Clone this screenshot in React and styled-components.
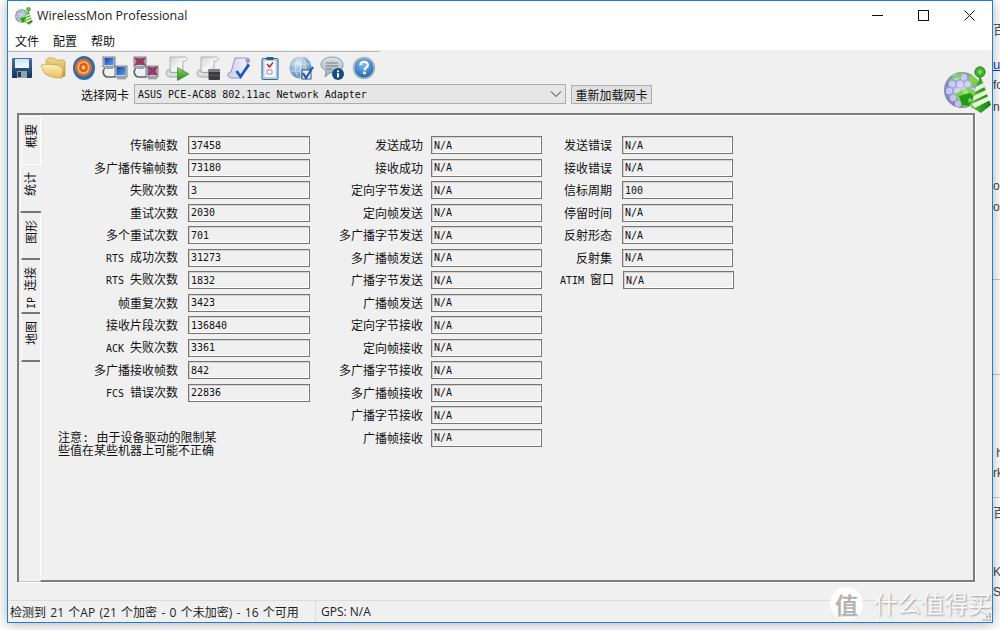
import styled, { createGlobalStyle } from "styled-components";

const GlobalStyle = createGlobalStyle`
  html, body {
    margin: 0;
    padding: 0;
    background: #fff;
  }
`;

const CJK = `"Noto Sans CJK SC", sans-serif`;
const MONO = `"DejaVu Sans Mono", "Liberation Mono", "Noto Sans CJK SC", monospace`;

const col1 = [
  ["传输帧数", "37458"],
  ["多广播传输帧数", "73180"],
  ["失败次数", "3"],
  ["重试次数", "2030"],
  ["多个重试次数", "701"],
  ["RTS 成功次数", "31273"],
  ["RTS 失败次数", "1832"],
  ["帧重复次数", "3423"],
  ["接收片段次数", "136840"],
  ["ACK 失败次数", "3361"],
  ["多广播接收帧数", "842"],
  ["FCS 错误次数", "22836"],
];

const col2 = [
  "发送成功", "接收成功", "定向字节发送", "定向帧发送", "多广播字节发送", "多广播帧发送", "广播字节发送",
  "广播帧发送", "定向字节接收", "定向帧接收", "多广播字节接收", "多广播帧接收", "广播字节接收", "广播帧接收",
].map((l) => [l, "N/A"]);

const col3 = [
  ["发送错误", "N/A"],
  ["接收错误", "N/A"],
  ["信标周期", "100"],
  ["停留时间", "N/A"],
  ["反射形态", "N/A"],
  ["反射集", "N/A"],
  ["ATIM 窗口", "N/A", true],
];

const tabs = [
  { label: "概要", h: 48, noLine: true },
  { label: "统计", h: 49, active: true },
  { label: "图形", h: 47 },
  { label: "IP 连接", h: 54 },
  { label: "地图", h: 48 },
];

const fragments = [
  { top: 23, text: "百", color: "#555", size: 13 },
  { top: 58, text: "u", color: "#1a35c0", size: 13, under: true },
  { top: 78, text: "fo", color: "#444", size: 12 },
  { top: 100, text: "n.", color: "#444", size: 12 },
  { top: 179, text: "oc", color: "#444", size: 12 },
  { top: 200, text: "o", color: "#444", size: 12 },
  { top: 446, text: " h", color: "#444", size: 12 },
  { top: 466, text: "rk", color: "#444", size: 12 },
  { top: 490, text: "---", color: "#aaa", size: 9 },
  { top: 506, text: "百", color: "#555", size: 13 },
  { top: 565, text: "KI", color: "#444", size: 12 },
  { top: 585, text: "SI", color: "#444", size: 12 },
];

// labels like "RTS 成功次数" have a small fixed-width latin part
function renderLabel(text) {
  const m = text.match(/^([A-Z]+ )(.*)$/);
  if (!m) return text;
  return (
    <>
      <Latin>{m[1]}</Latin>
      {m[2]}
    </>
  );
}

/* ---------- toolbar drawings ---------- */

function SaveIcon() {
  return (
    <svg width="24" height="24" viewBox="0 0 24 24">
      <defs>
        <linearGradient id="saveBody" x1="0" y1="0" x2="0" y2="1">
          <stop offset="0" stopColor="#3f78ab" />
          <stop offset="1" stopColor="#16324f" />
        </linearGradient>
        <linearGradient id="saveLabel" x1="0" y1="0" x2="0" y2="1">
          <stop offset="0" stopColor="#cfe5f7" />
          <stop offset="1" stopColor="#f4f9fd" />
        </linearGradient>
      </defs>
      <rect x="2" y="2" width="20" height="20" rx="1" fill="url(#saveBody)" />
      <rect x="5" y="3" width="14" height="9" fill="url(#saveLabel)" />
      <rect x="7" y="15" width="10" height="7" fill="#8ea3b5" />
      <rect x="8" y="16" width="3" height="5" fill="#1c3a58" />
    </svg>
  );
}

function FolderIcon() {
  return (
    <svg width="26" height="24" viewBox="0 0 26 24">
      <defs>
        <linearGradient id="folderBack" x1="0" y1="0" x2="0" y2="1">
          <stop offset="0" stopColor="#f3d98c" />
          <stop offset="1" stopColor="#c49a3e" />
        </linearGradient>
        <linearGradient id="folderFront" x1="0" y1="0" x2="0" y2="1">
          <stop offset="0" stopColor="#fff0bd" />
          <stop offset="1" stopColor="#e9bd5c" />
        </linearGradient>
      </defs>
      <path d="M6 5l2-3h6l2 2h7c1 0 2 1 2 2v14l-3 1L6 14z" fill="url(#folderBack)" stroke="#b08a3a" strokeWidth=".6" />
      <path d="M1 9c5-1 10-1 15 0 3 .5 6 2 7 4l-1 9c-6 0-12-1-17-4C3 15 2 12 1 9z" fill="url(#folderFront)" stroke="#b8923f" strokeWidth=".6" />
    </svg>
  );
}

function TargetIcon() {
  return (
    <svg width="24" height="26" viewBox="0 0 24 26">
      <ellipse cx="12" cy="13" rx="11" ry="12" fill="#2c6ca8" />
      <ellipse cx="11.5" cy="12.5" rx="8.5" ry="9" fill="#d8693a" />
      <ellipse cx="11.5" cy="12.5" rx="6.2" ry="6.6" fill="#e8b74a" />
      <ellipse cx="11.5" cy="12.5" rx="4.2" ry="4.5" fill="#d9502f" />
      <ellipse cx="11.5" cy="12.5" rx="2" ry="2.2" fill="#f0c74f" />
    </svg>
  );
}

function NetworkIcon({ id, broken }) {
  return (
    <svg width="26" height="25" viewBox="0 0 26 25">
      <defs>
        <linearGradient id={id} x1="0" y1="0" x2="1" y2="1">
          <stop offset="0" stopColor="#1f3fb0" />
          <stop offset="1" stopColor="#5aa0e8" />
        </linearGradient>
      </defs>
      <path d="M3 12c-3 3-2 8 2 9h8" fill="none" stroke="#5b6468" strokeWidth="1.6" />
      <rect x="1" y="1" width="12" height="10" fill="#c6ced2" stroke="#5a6670" strokeWidth=".8" />
      <rect x="2.5" y="2" width="9" height="7" fill={broken ? "#4a6bb8" : `url(#${id})`} />
      <rect x="4" y="11" width="7" height="2" fill="#9aa3a8" />
      <rect x="13" y="10" width="12" height="11" fill="#c6ced2" stroke="#5a6670" strokeWidth=".8" />
      <rect x="14.5" y="11" width="9" height="8" fill={broken ? "#4a6bb8" : `url(#${id})`} />
      <rect x="15" y="21" width="9" height="2.4" fill="#9aa3a8" />
      {broken && (
        <g stroke="#d5202a" strokeWidth="1.8">
          <path d="M2 2l10 7M12 2L2 9" />
          <path d="M15 11l9 8M24 11l-9 8" />
        </g>
      )}
    </svg>
  );
}

function Scroll({ id }) {
  return (
    <>
      <defs>
        <linearGradient id={id} x1="0" y1="0" x2="1" y2="1">
          <stop offset="0" stopColor="#d2d6d6" />
          <stop offset=".55" stopColor="#f6f7f7" />
          <stop offset="1" stopColor="#c2c7c7" />
        </linearGradient>
      </defs>
      <path d="M5 1h15c2.5 0 3 3.6 .5 4.2H18V17H8c-1.5 0-2-2-3-2z" fill={`url(#${id})`} stroke="#9ea5a5" strokeWidth=".8" />
      <path d="M2 15c0-1 1-1.4 2-1 1 .4 1.6 1.4 1.6 2.4h11c1.4 0 2 2 1.4 4.6H5c-3.5 0-5-3.5-3-6z" fill="#dadddd" stroke="#8d9494" strokeWidth=".8" />
    </>
  );
}

function ScrollPlayIcon() {
  return (
    <svg width="25" height="25" viewBox="0 0 25 25">
      <defs>
        <linearGradient id="playFill" x1="0" y1="0" x2="0" y2="1">
          <stop offset="0" stopColor="#8ed35c" />
          <stop offset="1" stopColor="#2f8a22" />
        </linearGradient>
      </defs>
      <Scroll id="scrollA" />
      <path d="M12.5 11.5L24 18l-11.5 6.5z" fill="url(#playFill)" stroke="#2a7a1c" strokeWidth=".6" />
    </svg>
  );
}

function ScrollStopIcon() {
  return (
    <svg width="25" height="25" viewBox="0 0 25 25">
      <Scroll id="scrollB" />
      <rect x="12.5" y="13" width="11.5" height="11" rx="1" fill="#3a3d3d" />
      <rect x="12.5" y="13" width="11.5" height="3" fill="#7c8080" />
      <rect x="12.5" y="19" width="11.5" height="1" fill="#5a5d5d" />
    </svg>
  );
}

function ScrollCheckIcon() {
  return (
    <svg width="25" height="25" viewBox="0 0 25 25">
      <defs>
        <linearGradient id="scrollC" x1="0" y1="0" x2="1" y2="0">
          <stop offset="0" stopColor="#c9cbea" />
          <stop offset="1" stopColor="#f7f7fc" />
        </linearGradient>
      </defs>
      <path d="M8 2h12c3.5 0 3.5 5 .5 5L19 11l-5 11H5c-3.5 0-5-2.5-4-4.500 1-1.500 3-1.500 3-1.500z" fill="url(#scrollC)" stroke="#7d80b8" strokeWidth=".8" />
      <circle cx="20.5" cy="4.5" r="2.2" fill="#9a9cc8" />
      <path d="M9.5 15l4 5.5 8.5-12" fill="none" stroke="#1c58c4" strokeWidth="2.8" />
    </svg>
  );
}

function ClipboardIcon() {
  return (
    <svg width="20" height="24" viewBox="0 0 20 24">
      <rect x="2" y="2.5" width="16" height="21" rx="1" fill="#b7cfe4" stroke="#2f6a9c" strokeWidth="1" />
      <rect x="4.5" y="5" width="11" height="16" fill="#fbfbfb" />
      <rect x="6.5" y="1" width="7" height="3" fill="#2f5f8c" />
      <path d="M7 8l2.5 3L13 6.5" fill="none" stroke="#c0262c" strokeWidth="1.5" />
      <rect x="7" y="14" width="5" height="4" fill="none" stroke="#8a8a8a" strokeWidth=".9" />
    </svg>
  );
}

function GlobeCheckIcon() {
  return (
    <svg width="25" height="25" viewBox="0 0 25 25">
      <defs>
        <radialGradient id="globeFill" cx=".4" cy=".3" r=".8">
          <stop offset="0" stopColor="#dfeaf5" />
          <stop offset=".6" stopColor="#7fa6cc" />
          <stop offset="1" stopColor="#3b6c9c" />
        </radialGradient>
      </defs>
      <circle cx="11.5" cy="11.5" r="11" fill="url(#globeFill)" />
      <g fill="none" stroke="#f2f6fa" strokeWidth=".7" opacity=".8">
        <ellipse cx="11.5" cy="11.5" rx="5" ry="11" />
        <path d="M1 8h21M1 15h21M11.5 .5v22" />
      </g>
      <rect x="13" y="14" width="9" height="9" fill="#e8eef4" stroke="#30465e" strokeWidth=".9" />
      <path d="M14 17l3 5 7-11" fill="none" stroke="#1c58c4" strokeWidth="2.2" />
    </svg>
  );
}

function SpeechInfoIcon() {
  return (
    <svg width="25" height="25" viewBox="0 0 25 25">
      <defs>
        <linearGradient id="speechFill" x1="0" y1="0" x2="0" y2="1">
          <stop offset="0" stopColor="#dde3e6" />
          <stop offset="1" stopColor="#9eabb2" />
        </linearGradient>
      </defs>
      <path d="M12 1c6 0 11 3 11 8s-5 8-10 8c-1 0-2 0-3-.3L5 21l1-6C3 13 1 11 1 9c0-5 5-8 11-8z" fill="url(#speechFill)" stroke="#76858e" strokeWidth=".8" />
      <path d="M6 7h12M6 10h12M6 13h6" stroke="#6f7f88" strokeWidth="1.2" />
      <circle cx="18" cy="18" r="6" fill="#134f86" />
      <rect x="17" y="17" width="2" height="4.4" fill="#fff" />
      <rect x="17" y="14.4" width="2" height="1.8" fill="#fff" />
    </svg>
  );
}

function HelpIcon() {
  return (
    <svg width="24" height="24" viewBox="0 0 24 24">
      <defs>
        <radialGradient id="helpFill" cx=".45" cy=".3" r=".8">
          <stop offset="0" stopColor="#7fbcf0" />
          <stop offset="1" stopColor="#1560a8" />
        </radialGradient>
      </defs>
      <circle cx="12" cy="12" r="11.2" fill="#a9b4bc" />
      <circle cx="12" cy="12" r="9.4" fill="url(#helpFill)" />
      <path d="M8.4 9.2c.3-4.4 7.4-4.4 7.4-.2 0 2.8-3.3 2.7-3.3 5.2" fill="none" stroke="#fff" strokeWidth="2.4" />
      <rect x="11.2" y="15.6" width="2.6" height="2.6" fill="#fff" />
    </svg>
  );
}

const hexCells = [
  [12, 11], [20, 11], [28, 13], [8, 18], [16, 18], [24, 18], [5, 25], [13, 25], [21, 25], [29, 25],
  [9, 32], [17, 32], [25, 32], [14, 38],
];

function Logo({ size }) {
  return (
    <svg width={size} height={size} viewBox="0 0 48 48">
      <defs>
        <radialGradient id={`logoGlobe${size}`} cx=".5" cy=".45" r=".6">
          <stop offset="0" stopColor="#c4c8f4" />
          <stop offset="1" stopColor="#7478b4" />
        </radialGradient>
        <linearGradient id={`logoCone${size}`} x1="0" y1="0" x2="1" y2="0">
          <stop offset="0" stopColor="#58c22f" />
          <stop offset=".6" stopColor="#2f9a1e" />
          <stop offset="1" stopColor="#127a0e" />
        </linearGradient>
      </defs>
      <circle cx="18" cy="24" r="18" fill={`url(#logoGlobe${size})`} />
      {hexCells.map(([x, y]) => (
        <polygon
          key={`${x}-${y}`}
          points={`${x - 3},${y - 2} ${x},${y - 3.6} ${x + 3},${y - 2} ${x + 3},${y + 2} ${x},${y + 3.6} ${x - 3},${y + 2}`}
          fill="#e8eaff"
          opacity=".6"
        />
      ))}
      <path d="M5 16c3-6 9-10 15-10l-3 5c-5 0-8 3-12 5zM27 8l7 6-3 7-7-7zM11 28l13-7 9 5-3 12-10 4-5-8z" fill="#7ad53e" opacity=".92" />
      <path d="M15 30l11-3 5 4-6 9-7-1z" fill="#259a18" />
      <path d="M33 9l3-1 1 3-2 2zM19 24l4-1 2 3-3 2-3-1zM24 33l3-1 1 3-3 2z" fill="#b7e69a" opacity=".7" />
      <path d="M36 9l11 30-10 8-10-6z" fill={`url(#logoCone${size})`} />
      <path d="M32 21l7-4 1.500 4-10 5zM29.500 30l12.500-6 1.500 4-15 7zM27.500 38l17.500-8 1.500 4-16 8z" fill="#e8f4de" />
      <circle cx="36" cy="6" r="5.2" fill="#3fae2d" stroke="#1c7a14" strokeWidth=".8" />
      <path d="M36 3.500v5M33.500 6h5" stroke="#a8e494" strokeWidth="1.200" />
    </svg>
  );
}

function Chevron() {
  return (
    <svg width="12" height="8" viewBox="0 0 12 8">
      <path d="M1 1.5l5 5 5-5" fill="none" stroke="#333" strokeWidth="1" />
    </svg>
  );
}

function Grip() {
  const dots = [[6, 0], [3, 3], [6, 3], [0, 6], [3, 6], [6, 6]];
  return (
    <svg width="8" height="8" viewBox="0 0 8 8">
      {dots.map(([x, y]) => (
        <rect key={`${x}${y}`} x={x} y={y} width="2" height="2" fill="#b8b8b8" />
      ))}
    </svg>
  );
}

/* ---------- page ---------- */

export default function App() {
  return (
    <Page>
      <GlobalStyle />
      {fragments.map((f) => (
        <Fragment key={f.top} $top={f.top} $color={f.color} $size={f.size} $under={f.under}>
          {f.text}
        </Fragment>
      ))}
      <BehindRule $top={279} />
      <BehindRule $top={374} />

      <Window>
        <TitleBar>
          <TitleIcon>
            <Logo size={18} />
          </TitleIcon>
          <TitleText>WirelessMon Professional</TitleText>
          <WindowControls>
            <ControlButton>
              <svg width="11" height="11" viewBox="0 0 11 11">
                <path d="M0 5.5h11" stroke="#111" strokeWidth="1" />
              </svg>
            </ControlButton>
            <ControlButton>
              <svg width="11" height="11" viewBox="0 0 11 11">
                <rect x=".5" y=".5" width="10" height="10" fill="none" stroke="#111" strokeWidth="1" />
              </svg>
            </ControlButton>
            <ControlButton>
              <svg width="11" height="11" viewBox="0 0 11 11">
                <path d="M.5 .5l10 10M10.5 .5l-10 10" stroke="#111" strokeWidth="1" />
              </svg>
            </ControlButton>
          </WindowControls>
        </TitleBar>

        <MenuBar>
          <MenuItem>文件</MenuItem>
          <MenuItem>配置</MenuItem>
          <MenuItem>帮助</MenuItem>
        </MenuBar>

        <Body>
          <Toolbar>
            <ToolButton><SaveIcon /></ToolButton>
            <ToolButton><FolderIcon /></ToolButton>
            <ToolButton><TargetIcon /></ToolButton>
            <ToolButton><NetworkIcon id="netA" /></ToolButton>
            <ToolButton><NetworkIcon id="netB" broken /></ToolButton>
            <ToolButton><ScrollPlayIcon /></ToolButton>
            <ToolButton><ScrollStopIcon /></ToolButton>
            <ToolButton><ScrollCheckIcon /></ToolButton>
            <ToolButton><ClipboardIcon /></ToolButton>
            <ToolButton><GlobeCheckIcon /></ToolButton>
            <ToolButton><SpeechInfoIcon /></ToolButton>
            <ToolButton><HelpIcon /></ToolButton>
          </Toolbar>

          <AdapterRow>
            <AdapterLabel>选择网卡</AdapterLabel>
            <Combo>
              <span>ASUS PCE-AC88 802.11ac Network Adapter</span>
              <Chevron />
            </Combo>
            <ReloadButton>重新加载网卡</ReloadButton>
          </AdapterRow>

          <Panel>
            <TabRail>
              {tabs.map((t) => (
                <Tab key={t.label} $h={t.h} $active={t.active} $noLine={t.noLine}>
                  <TabLabel>{renderLabel(t.label)}</TabLabel>
                </Tab>
              ))}
            </TabRail>
            <StatsPane>
              <StatsColumn>
                <FieldGrid $label={137} $field={122} $gap={10}>
                  {col1.map(([label, value]) => (
                    <FieldRow key={label} label={label} value={value} />
                  ))}
                </FieldGrid>
                <Note>
                  注意<NoteColon>: </NoteColon>由于设备驱动的限制某
                  <br />
                  些值在某些机器上可能不正确
                </Note>
              </StatsColumn>
              <StatsColumn>
                <FieldGrid $label={113} $field={111} $gap={8}>
                  {col2.map(([label, value]) => (
                    <FieldRow key={label} label={label} value={value} />
                  ))}
                </FieldGrid>
              </StatsColumn>
              <StatsColumn>
                <FieldGrid $label={70} $field={111} $gap={10}>
                  {col3.map(([label, value, nudge]) => (
                    <FieldRow key={label} label={label} value={value} nudge={nudge} />
                  ))}
                </FieldGrid>
              </StatsColumn>
            </StatsPane>
          </Panel>
        </Body>

        <StatusBar>
          <StatusCell>检测到 21 个AP (21 个加密 - 0 个未加密) - 16 个可用</StatusCell>
          <StatusCell $last>GPS: N/A</StatusCell>
        </StatusBar>

        <CornerLogo>
          <Logo size={48} />
        </CornerLogo>

        <Watermark>
          <WatermarkBadge>值</WatermarkBadge>
          <WatermarkText>什么值得买</WatermarkText>
        </Watermark>

        <GripCorner>
          <Grip />
        </GripCorner>
      </Window>
    </Page>
  );
}

function FieldRow({ label, value, nudge }) {
  return (
    <>
      <FieldLabel $nudge={nudge}>{renderLabel(label)}</FieldLabel>
      <FieldBox $nudge={nudge}>{value}</FieldBox>
    </>
  );
}

const Page = styled.div`
  position: relative;
  width: 1000px;
  height: 630px;
  overflow: hidden;
  background: #fff;
  padding-left: 7px;
  box-sizing: border-box;
`;

const Fragment = styled.div`
  position: absolute;
  left: 993px;
  top: ${(p) => p.$top}px;
  font-family: "Liberation Sans", ${CJK};
  font-size: ${(p) => p.$size}px;
  line-height: 14px;
  white-space: pre;
  color: ${(p) => p.$color};
  text-decoration: ${(p) => (p.$under ? "underline" : "none")};
`;

const BehindRule = styled.div`
  position: absolute;
  left: 993px;
  right: 0;
  top: ${(p) => p.$top}px;
  height: 1px;
  background: #c8c8c8;
`;

const Window = styled.div`
  position: relative;
  width: 986px;
  height: 623px;
  box-sizing: border-box;
  display: flex;
  flex-direction: column;
  border: 1px solid #1a80d4;
  background: #f0f0f0;
  box-shadow: 0 1px 12px rgba(0, 0, 0, 0.32);
`;

const TitleBar = styled.div`
  height: 30px;
  flex: none;
  display: flex;
  align-items: center;
  background: #fff;
`;

const TitleIcon = styled.div`
  width: 18px;
  height: 18px;
  margin-left: 7px;
  margin-right: 4px;
  margin-bottom: 1px;
  display: flex;
`;

const TitleText = styled.div`
  margin-bottom: 2px;
  font-family: "Open Sans", "Noto Sans", sans-serif;
  font-size: 12.5px;
  color: #222;
`;

const WindowControls = styled.div`
  margin-left: auto;
  display: flex;
`;

const ControlButton = styled.div`
  width: 46px;
  height: 30px;
  padding-bottom: 2px;
  box-sizing: border-box;
  display: flex;
  align-items: center;
  justify-content: center;
`;

const MenuBar = styled.div`
  height: 19px;
  flex: none;
  display: flex;
  gap: 14px;
  align-items: center;
  padding-left: 7px;
  background: #fff;
`;

const MenuItem = styled.div`
  font-family: ${CJK};
  font-size: 12px;
  color: #111;
`;

const Body = styled.div`
  flex: 1;
  min-height: 0;
  display: flex;
  flex-direction: column;
`;

const Toolbar = styled.div`
  height: 33px;
  width: 372px;
  flex: none;
  box-sizing: border-box;
  margin-top: 1px;
  border-top: 1px solid #b9b9b9;
  display: flex;
  align-items: center;
`;

const ToolButton = styled.div`
  width: 31.1px;
  height: 26px;
  flex: none;
  display: flex;
  align-items: center;
  justify-content: center;

  &:first-child {
    margin-left: -2px;
  }
`;

const AdapterRow = styled.div`
  height: 20px;
  flex: none;
  display: flex;
  align-items: center;
  margin-left: 73px;
`;

const AdapterLabel = styled.div`
  width: 47px;
  font-family: ${CJK};
  font-size: 12px;
  white-space: nowrap;
  color: #111;
`;

const Combo = styled.div`
  width: 432px;
  height: 20px;
  box-sizing: border-box;
  margin-left: 6px;
  padding: 0 3px;
  display: flex;
  align-items: center;
  justify-content: space-between;
  background: #e6e6e6;
  border: 1px solid #adadad;
  font-family: ${MONO};
  font-size: 10px;
  color: #111;
`;

const ReloadButton = styled.div`
  width: 81px;
  height: 19px;
  box-sizing: border-box;
  margin-left: 5px;
  display: flex;
  align-items: center;
  justify-content: center;
  background: #e1e1e1;
  border: 1px solid #adadad;
  font-family: ${CJK};
  font-size: 12px;
  color: #111;
`;

const Panel = styled.div`
  width: 958px;
  height: 469px;
  flex: none;
  box-sizing: border-box;
  margin: 9px 0 0 9px;
  display: flex;
  border: 2px solid #7d7d7d;
  border-bottom: none;
  box-shadow: 1px 1px 0 #fff;
`;

const TabRail = styled.div`
  width: 21px;
  flex: none;
  padding-top: 1px;
  display: flex;
  flex-direction: column;
  align-items: flex-end;
  border-bottom: 1px solid #c8c8c8;
`;

const Tab = styled.div`
  box-sizing: border-box;
  height: ${(p) => p.$h}px;
  width: ${(p) => (p.$active ? 21 : 19)}px;
  flex: none;
  display: flex;
  justify-content: center;
  padding-top: 7px;
  background: #f0f0f0;
  border-left: 1px solid #fff;
  border-top: ${(p) => (p.$noLine || p.$active ? "1px solid #fff" : "none")};
  border-bottom: ${(p) => (p.$noLine ? "none" : "2px solid #777")};
  margin-right: ${(p) => (p.$active ? -1 : 0)}px;
  padding-right: ${(p) => (p.$active ? 3 : 0)}px;
  position: relative;
  z-index: ${(p) => (p.$active ? 1 : 0)};
`;

const TabLabel = styled.span`
  writing-mode: vertical-rl;
  text-orientation: sideways;
  transform: rotate(180deg);
  font-family: ${CJK};
  font-size: 12px;
  line-height: 14px;
  height: fit-content;
  white-space: nowrap;
  color: #111;
`;

const StatsPane = styled.div`
  flex: 1;
  min-width: 0;
  display: flex;
  padding-top: 20px;
  border-top: 1px solid #fff;
  border-left: 1px solid #fff;
  border-bottom: 2px solid #7d7d7d;
  box-sizing: border-box;
`;

const StatsColumn = styled.div`
  flex: none;
  display: flex;
  flex-direction: column;
`;

const FieldGrid = styled.div`
  display: grid;
  grid-template-columns: ${(p) => p.$label}px ${(p) => p.$field}px;
  column-gap: ${(p) => p.$gap}px;
  grid-auto-rows: 18px;
  row-gap: 4.5px;
  align-items: center;
`;

const FieldLabel = styled.div`
  text-align: right;
  font-family: ${CJK};
  font-size: 12px;
  line-height: 18px;
  white-space: nowrap;
  color: #111;
  margin-right: ${(p) => (p.$nudge ? -2 : 0)}px;
`;

const Latin = styled.span`
  font-family: ${MONO};
  font-size: 10px;
`;

const FieldBox = styled.div`
  height: 18px;
  box-sizing: border-box;
  padding-left: 2px;
  display: flex;
  align-items: center;
  margin-left: ${(p) => (p.$nudge ? 1 : 0)}px;
  margin-right: ${(p) => (p.$nudge ? -1 : 0)}px;
  border: 1px solid #767676;
  box-shadow: inset 1px 1px 0 #d2d2d2, inset -1px -1px 0 #fff;
  font-family: ${MONO};
  font-size: 10px;
  color: #111;
`;

const Note = styled.div`
  margin: 29px 0 0 17px;
  font-family: ${CJK};
  font-size: 12px;
  line-height: 12px;
  color: #111;
`;

const NoteColon = styled.span`
  font-family: ${MONO};
  white-space: pre;
`;

const StatusBar = styled.div`
  height: 22px;
  flex: none;
  margin-top: auto;
  display: flex;
  align-items: center;
  box-sizing: border-box;
  border-top: 1px solid #dcdcdc;
`;

const StatusCell = styled.div`
  width: ${(p) => (p.$last ? "auto" : "308px")};
  height: 21px;
  box-sizing: border-box;
  padding-left: ${(p) => (p.$last ? 5 : 2)}px;
  display: flex;
  align-items: center;
  white-space: pre;
  word-spacing: ${(p) => (p.$last ? 0 : 1.2)}px;
  border-right: ${(p) => (p.$last ? "none" : "1px solid #dcdcdc")};
  font-family: "Open Sans", "Noto Sans", ${CJK};
  font-size: 12px;
  color: #222;
`;

const CornerLogo = styled.div`
  position: absolute;
  right: 0;
  top: 65px;
  display: flex;
`;

const Watermark = styled.div`
  position: absolute;
  left: 822px;
  top: 586px;
  display: flex;
  align-items: center;
  gap: 11px;
`;

const WatermarkBadge = styled.div`
  width: 33px;
  height: 33px;
  border-radius: 50%;
  display: flex;
  align-items: center;
  justify-content: center;
  background: rgba(255, 255, 255, 0.88);
  font-family: ${CJK};
  font-size: 23px;
  font-weight: 700;
  color: #b4b4b4;
`;

const WatermarkText = styled.div`
  font-family: ${CJK};
  font-size: 23.5px;
  line-height: 33px;
  white-space: nowrap;
  color: rgba(255, 255, 255, 0.9);
  text-shadow: 1px 1px 2px rgba(0, 0, 0, 0.35);
`;

const GripCorner = styled.div`
  position: absolute;
  right: 1px;
  bottom: 1px;
  display: flex;
`;
